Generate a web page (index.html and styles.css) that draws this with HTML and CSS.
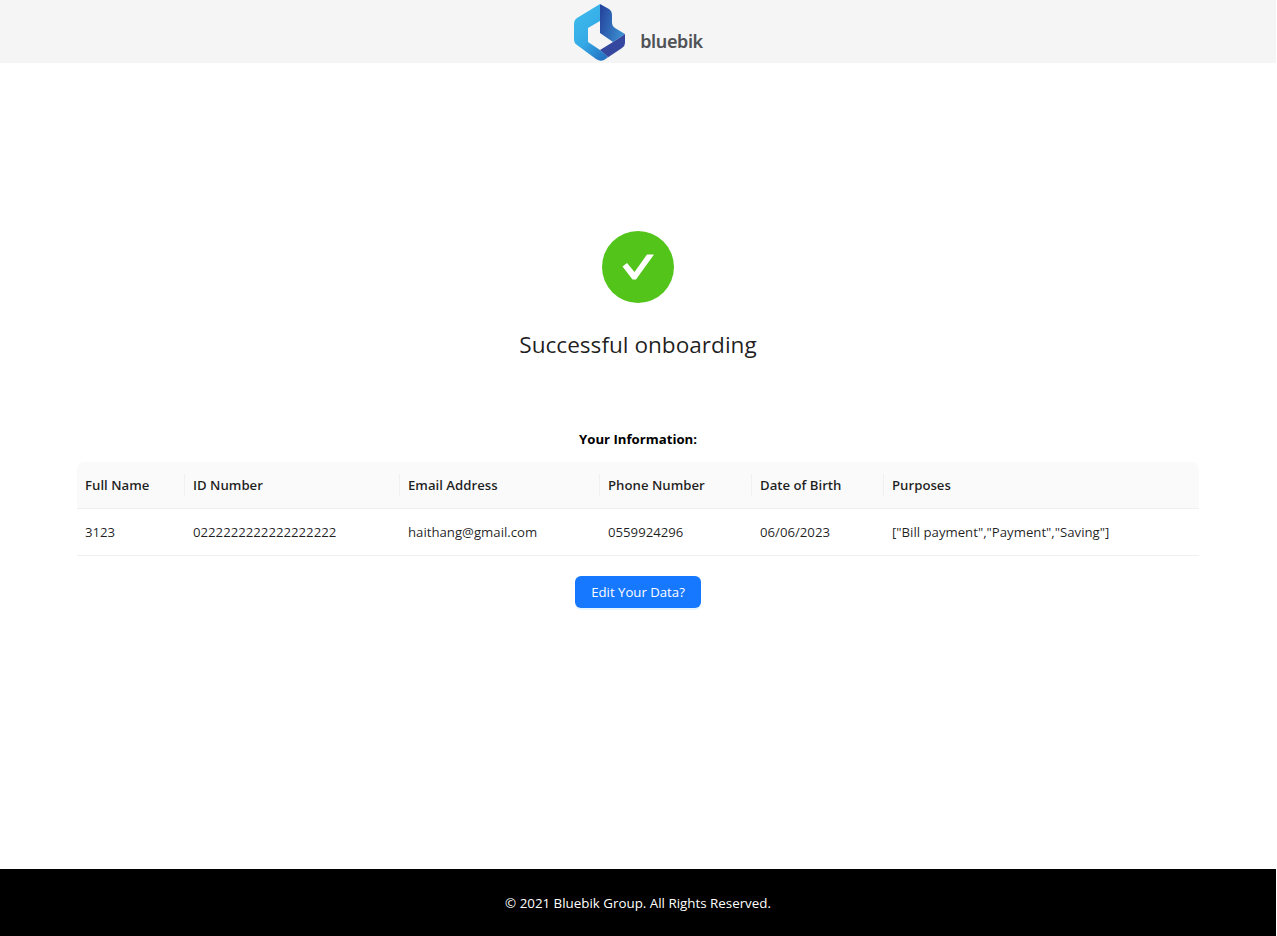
FILE: index.html
```html
<!DOCTYPE html>
<html lang="en">
<head>
  <meta charset="UTF-8">
  <title>Successful onboarding</title>
  <link rel="stylesheet" href="styles.css">
</head>
<body>
  <header class="site-header">
    <div class="logo">
      <svg class="logo-mark" width="52" height="58" viewBox="0 0 52 58">
        <defs>
          <linearGradient id="leftFace" x1="0.2" y1="0.1" x2="0.8" y2="1">
            <stop offset="0" stop-color="#3cb9ec"/>
            <stop offset="0.5" stop-color="#35aae6"/>
            <stop offset="1" stop-color="#2474c4"/>
          </linearGradient>
          <linearGradient id="rightFace" x1="0" y1="0.3" x2="1" y2="0.7">
            <stop offset="0" stop-color="#27479f"/>
            <stop offset="1" stop-color="#3b93d4"/>
          </linearGradient>
        </defs>
        <path d="M26 0 L3 14 Q0 16 0 20 V36 Q0 39 3 41 L22 55 Q26 58 30 56 L34 53 L26 46 L14 38 V24 L26 17 Z" fill="url(#leftFace)"/>
        <path d="M26 0 L35 5 Q38 7 38 11 V19 Q38 22 41 24 L51 30 L39 38 L26 29 Z" fill="url(#rightFace)"/>
        <path d="M26 46 L39 38 L51 30 V39 Q51 42 48 44 L30 56 L34 53 Z" fill="#35479f"/>
      </svg>
      <span class="logo-text">bluebik</span>
    </div>
  </header>

  <main class="content">
    <section class="result">
      <div class="result-icon">
        <svg width="34" height="28" viewBox="0 0 34 28">
          <polygon points="26,1.5 33,1.5 15,26.5 11.5,26.5 1.5,13.5 6,10 13.5,19" fill="#fff"/>
        </svg>
      </div>
      <div class="result-title">Successful onboarding</div>
    </section>

    <h4 class="info-title">Your Information:</h4>

    <table class="info-table">
      <thead>
        <tr>
          <th class="col-name">Full Name</th>
          <th class="col-id">ID Number</th>
          <th class="col-email">Email Address</th>
          <th class="col-phone">Phone Number</th>
          <th class="col-dob">Date of Birth</th>
          <th>Purposes</th>
        </tr>
      </thead>
      <tbody>
        <tr>
          <td>3123</td>
          <td>0222222222222222222</td>
          <td>haithang@gmail.com</td>
          <td>0559924296</td>
          <td>06/06/2023</td>
          <td>["Bill payment","Payment","Saving"]</td>
        </tr>
      </tbody>
    </table>

    <button class="edit-btn">Edit Your Data?</button>
  </main>

  <footer class="site-footer">© 2021 Bluebik Group. All Rights Reserved.</footer>
</body>
</html>
```
FILE: styles.css
```css
* {
  box-sizing: border-box;
}

body {
  margin: 0;
  width: 1276px;
  min-height: 936px;
  display: flex;
  flex-direction: column;
  font-family: "Open Sans", "Noto Sans", Arial, sans-serif;
  font-size: 13.2px;
  color: rgba(0, 0, 0, 0.88);
  background-color: #fff;
}

.site-header {
  height: 63px;
  background-color: #f5f5f5;
  display: flex;
  justify-content: center;
  overflow: hidden;
}

.logo {
  display: flex;
  align-items: flex-start;
  padding: 4px 0 0 1px;
}

.logo-text {
  margin: 25px 0 0 14px;
  font-family: "Noto Sans", Arial, sans-serif;
  font-size: 18px;
  font-weight: 600;
  line-height: 24px;
  letter-spacing: -0.4px;
  color: #4f5256;
}

.content {
  flex: 1;
  display: flex;
  flex-direction: column;
  align-items: center;
  padding: 168px 77px 0;
}

.result {
  display: flex;
  flex-direction: column;
  align-items: center;
}

.result-icon {
  width: 72px;
  height: 72px;
  border-radius: 50%;
  background-color: #52c41a;
  display: flex;
  align-items: center;
  justify-content: center;
}

.result-title {
  margin-top: 25px;
  font-size: 22.6px;
  line-height: 34px;
}

.info-title {
  margin: 67px 0 13px;
  font-size: 13.2px;
  font-weight: 700;
  line-height: 20px;
  color: #000;
}

.info-table {
  width: 100%;
  border-collapse: separate;
  border-spacing: 0;
  table-layout: fixed;
}

.info-table th,
.info-table td {
  padding: 0 8px;
  height: 47px;
  text-align: left;
  border-bottom: 1px solid #f0f0f0;
}

.info-table th {
  position: relative;
  background-color: #fafafa;
  font-weight: 600;
}

.info-table th:first-child {
  border-top-left-radius: 8px;
}

.info-table th:last-child {
  border-top-right-radius: 8px;
}

/* small divider between the header cells */
.info-table th + th::before {
  content: "";
  position: absolute;
  left: -1px;
  top: 12px;
  height: 22px;
  width: 1px;
  background-color: #f0f0f0;
}

.col-name {
  width: 108px;
}

.col-id {
  width: 215px;
}

.col-email {
  width: 200px;
}

.col-phone {
  width: 152px;
}

.col-dob {
  width: 132px;
}

.edit-btn {
  margin-top: 20px;
  width: 126px;
  height: 32px;
  border: none;
  border-radius: 6px;
  background-color: #1677ff;
  color: #fff;
  font-family: inherit;
  font-size: 13.2px;
  box-shadow: 0 2px 0 rgba(5, 145, 255, 0.1);
}

.site-footer {
  height: 67px;
  background-color: #000;
  color: #fff;
  font-size: 13.35px;
  display: flex;
  align-items: center;
  justify-content: center;
}
```
